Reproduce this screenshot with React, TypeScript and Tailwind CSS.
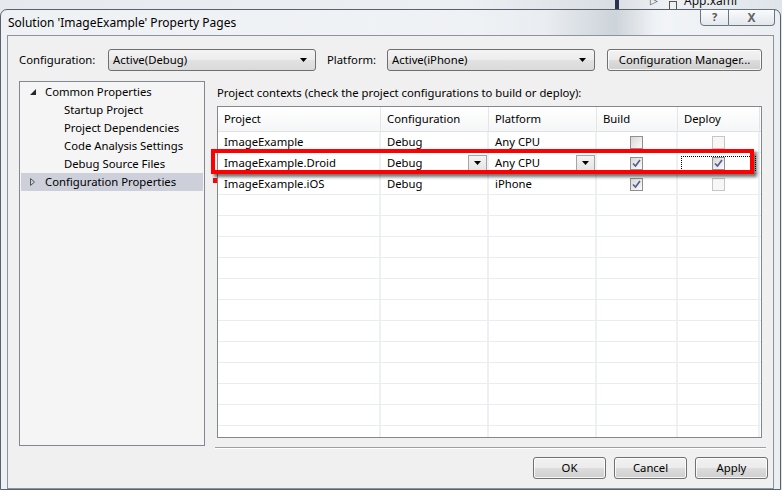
import React from 'react';

const Arrow = () => (
  <svg width="7" height="4" viewBox="0 0 7 4">
    <path d="M0 0h7L3.5 4z" fill="#000" />
  </svg>
);

const Combo = ({ value }: { value: string }) => (
  <div className="w-[208px] h-[22px] flex items-center justify-between rounded-[3px] border border-[#707070] bg-[linear-gradient(#f4f4f4,#ececec_50%,#e2e2e2_50%,#dadada)] pl-[4px] pr-[8px]">
    <span>{value}</span>
    <Arrow />
  </div>
);

const Button = ({ label, w }: { label: string; w: string }) => (
  <div
    className={`${w} h-[22px] flex items-center justify-center rounded-[3px] border border-[#707070] bg-[linear-gradient(#f2f2f2,#ebebeb_50%,#dddddd_50%,#cfcfcf)] shadow-[inset_0_0_0_1px_rgba(255,255,255,0.8)]`}
  >
    {label}
  </div>
);

const Check = ({ checked, disabled }: { checked?: boolean; disabled?: boolean }) => (
  <div
    className={
      disabled
        ? 'w-[13px] h-[13px] border border-[#c6c6c6] bg-[#f7f7f7] flex items-center justify-center'
        : 'w-[13px] h-[13px] border border-[#8e8f8f] bg-[linear-gradient(135deg,#d8d8d8,#fbfbfb)] flex items-center justify-center'
    }
  >
    {checked && (
      <svg width="9" height="9" viewBox="0 0 9 9">
        <path d="M1 4.5 3.5 7 8 1" fill="none" stroke="#4c5d8c" strokeWidth="1.6" />
      </svg>
    )}
  </div>
);

const CellDrop = () => (
  <div className="w-[19px] h-[16px] border border-[#a5a5a5] bg-[linear-gradient(#f4f4f4,#e4e4e4)] flex items-center justify-center">
    <Arrow />
  </div>
);

const rows = [
  { project: 'ImageExample', conf: 'Debug', plat: 'Any CPU', build: false, deploy: false, deployOff: true },
  { project: 'ImageExample.Droid', conf: 'Debug', plat: 'Any CPU', build: true, deploy: true, deployOff: false, edit: true },
  { project: 'ImageExample.iOS', conf: 'Debug', plat: 'iPhone', build: true, deploy: false, deployOff: true },
];

const cols = ['w-[163px]', 'w-[108px]', 'w-[108px]', 'w-[81px]', 'w-[82px]'];

const App = () => {
  const empty = Array.from({ length: 13 });

  return (
    <div className="relative w-[782px] h-[490px] overflow-hidden bg-[linear-gradient(90deg,#e6eaee,#edf0f3_60%,#d9dee4_78%,#eef1f4_85%,#dfe4e9)] font-['Noto_Sans',sans-serif] text-[11.3px] text-black">
      {/* stuff behind the dialog */}
      <div className="h-[9px] flex items-start overflow-hidden pl-[615px]">
        <div className="w-[4px] h-[9px] bg-[#28324a]" />
        <span className="ml-[31px] -mt-[6px] text-[10px] leading-[12px] text-[#444]">▷</span>
        <div className="ml-[11px] mt-[1px] w-[8px] h-[8px] border border-[#555] border-b-0" />
        <span className="ml-[7px] -mt-[6px] text-[12px] leading-[14px] text-[#111]">App.xaml</span>
      </div>

      {/* dialog window */}
      <div className="w-[781px] h-[481px] border border-[#59626c] rounded-t-[7px] bg-[linear-gradient(90deg,rgba(255,255,255,0.35),rgba(240,243,246,0.5)_70%,rgba(190,198,206,0.45)_79%,rgba(245,247,249,0.5)_84%)]">
        <div className="h-[25px] flex justify-between">
          <div className="pl-[7px] pt-[5px] text-[12px] leading-[16px]">Solution 'ImageExample' Property Pages</div>
          <div className="flex h-[17px] mr-[5px] -mt-px">
            <div className="w-[29px] h-full border border-[#6b7580] rounded-bl-[4px] bg-[linear-gradient(rgba(255,255,255,0.7),rgba(220,226,232,0.6))] flex items-center justify-center text-[11px] text-[#555] font-bold">
              ?
            </div>
            <div className="w-[46px] h-full border border-l-0 border-[#6b7580] rounded-br-[4px] bg-[linear-gradient(rgba(255,255,255,0.7),rgba(220,226,232,0.6))] flex items-center justify-center text-[12px] text-[#666] font-bold">
              X
            </div>
          </div>
        </div>

        {/* client area */}
        <div className="mx-[6px] h-[454px] border border-[#8a949e] bg-[#f0f0f0]">
          <div className="mt-[13px] h-[22px] flex items-center pl-[11px]">
            <span className="w-[89px] pt-px">Configuration:</span>
            <Combo value="Active(Debug)" />
            <span className="ml-[11px] w-[60px] pt-px">Platform:</span>
            <Combo value="Active(iPhone)" />
            <div className="ml-[12px]">
              <Button label="Configuration Manager..." w="w-[155px]" />
            </div>
          </div>

          <div className="mt-[10px] flex">
            {/* tree */}
            <div className="ml-[11px] w-[186px] h-[365px] border border-[#828790] bg-[#f5f5f5] pt-px">
              <div className="h-[18px] flex items-center">
                <svg width="6" height="6" viewBox="0 0 6 6" className="ml-[10px]">
                  <path d="M6 0v6H0z" fill="#262626" />
                </svg>
                <span className="ml-[9px]">Common Properties</span>
              </div>
              {['Startup Project', 'Project Dependencies', 'Code Analysis Settings', 'Debug Source Files'].map((t) => (
                <div key={t} className="h-[18px] flex items-center pl-[44px]">
                  {t}
                </div>
              ))}
              <div className="mx-px h-[18px] flex items-center bg-[#cdd0db]">
                <svg width="5" height="8" viewBox="0 0 5 8" className="ml-[9px]">
                  <path d="M.5.5 4.5 4 .5 7.5z" fill="none" stroke="#555" />
                </svg>
                <span className="ml-[10px]">Configuration Properties</span>
              </div>
            </div>

            {/* contexts */}
            <div className="ml-[12px] w-[545px]">
              <div className="h-[25px] flex items-center pb-[1px]">
                Project contexts (check the project configurations to build or deploy):
              </div>
              <div className="h-[332px] border border-[#828790] bg-white overflow-hidden">
                <div className="h-[25px] flex border-b border-[#e2e2e2] bg-[linear-gradient(#ffffff,#f5f6f7)]">
                  {['Project', 'Configuration', 'Platform', 'Build', 'Deploy'].map((h, i) => (
                    <div key={h} className={`${cols[i]} flex items-center pl-[6px] pt-px border-r border-[#e5e5e5]`}>
                      {h}
                    </div>
                  ))}
                  <div className="flex-1" />
                </div>
                {rows.map((r) => (
                  <div key={r.project} className="h-[21px] flex border-b border-[#ececec]">
                    <div className={`${cols[0]} flex items-center pl-[6px] pt-px border-r-2 border-[#edf0f5]`}>{r.project}</div>
                    <div className={`${cols[1]} flex items-center justify-between pl-[6px] border-r-2 border-[#edf0f5]`}>
                      <span className="pt-px">{r.conf}</span>
                      {r.edit && <CellDrop />}
                    </div>
                    <div className={`${cols[2]} flex items-center justify-between pl-[6px] border-r-2 border-[#edf0f5]`}>
                      <span className="pt-px">{r.plat}</span>
                      {r.edit && <CellDrop />}
                    </div>
                    <div className={`${cols[3]} flex items-center justify-center border-r-2 border-[#edf0f5]`}>
                      <Check checked={r.build} />
                    </div>
                    <div className={`${cols[4]} flex items-center justify-center border-r-2 border-[#edf0f5]`}>
                      {r.edit ? (
                        <div className="w-[75px] h-[15px] border border-dotted border-black flex items-center justify-center">
                          <Check checked />
                        </div>
                      ) : (
                        <Check checked={r.deploy} disabled={r.deployOff} />
                      )}
                    </div>
                    <div className="flex-1" />
                  </div>
                ))}
                {empty.map((_, i) => (
                  <div key={i} className="h-[21px] flex border-b border-[#ececec]">
                    {cols.map((c, j) => (
                      <div key={j} className={`${c} border-r-2 border-[#edf0f5]`} />
                    ))}
                  </div>
                ))}
              </div>
            </div>
          </div>

          <div className="mt-px ml-[207px] w-[551px] h-[2px] border-t border-[#a0a0a0] border-b border-b-white" />

          <div className="mt-[8px] flex justify-end gap-[8px] pr-[5px]">
            <Button label="OK" w="w-[73px]" />
            <Button label="Cancel" w="w-[73px]" />
            <Button label="Apply" w="w-[73px]" />
          </div>
        </div>
      </div>

      {/* red annotation */}
      <div className="absolute left-[211px] top-[149px] w-[543px] h-[25px] border-[4px] border-[#ff0000] shadow-[3px_3px_3px_rgba(0,0,0,0.55)]" />
      <div className="absolute left-[213px] top-[178px] w-[4px] h-[5px] bg-[#ff0000]" />
    </div>
  );
};

export default App;
